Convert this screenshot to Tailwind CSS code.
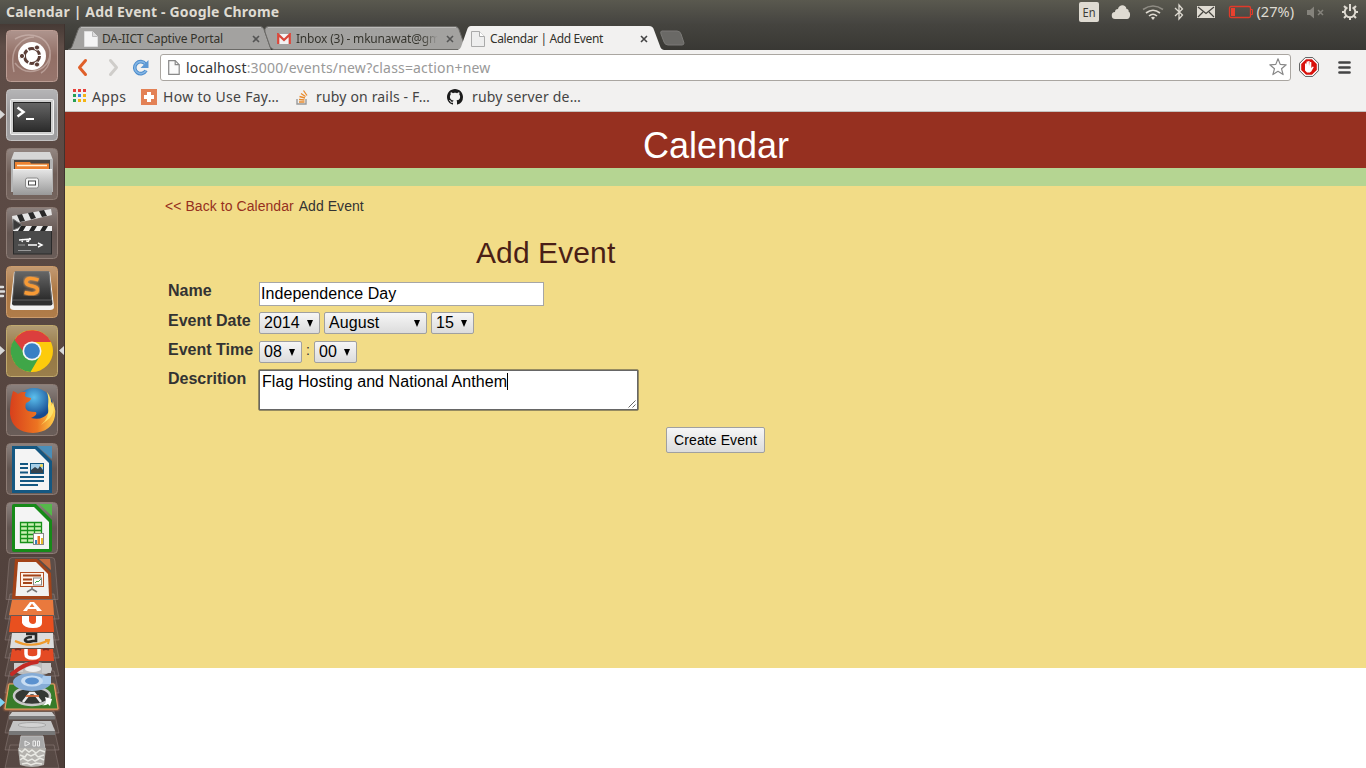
<!DOCTYPE html>
<html lang="en">
<head>
<meta charset="utf-8">
<title>Calendar | Add Event</title>
<script src="https://cdn.jsdelivr.net/npm/@tailwindcss/browser@4"></script>
</head>
<body class="flex h-[768px] w-[1366px] flex-col overflow-hidden bg-white font-['Noto_Sans',sans-serif]">

<!-- System panel -->
<header class="flex h-6 shrink-0 items-center justify-between bg-linear-to-b from-[#5a594f] to-[#454440] pl-1.5 pr-1.5 text-[#dfdbd2]">
  <span class="whitespace-nowrap text-[14px] font-bold leading-6 tracking-[0.17px]">Calendar | Add Event - Google Chrome</span>
  <svg class="h-6 w-[284px]" viewBox="1076 0 284 24" fill="none" stroke="#dfdbd2">
    <rect x="1079" y="2" width="20" height="20" rx="2" fill="#dfdbd2" stroke="none"/>
    <text x="1082.500" y="17" font-size="12.500" textLength="13" lengthAdjust="spacingAndGlyphs" fill="#3c3b37" stroke="none">En</text>
    <path d="M1115.500 19a3.500 3.500 0 0 1-.5-7q0-3 3-3c1-5 8-5 8.500 0 2 0 2.500 1.500 2 2.500 2.500 1 2 7.500-1.500 7.500z" fill="#dfdbd2" stroke="none"/>
    <path d="M1143 9.500q10-7 20 0" stroke="#8f8c84" stroke-width="1.600"/>
    <path d="M1146 13q7-5.500 14 0M1149 16q4-3.500 8 0" stroke-width="1.600"/><path d="M1151 17.500q2-1.500 4 0l-2 2.500z" fill="#dfdbd2" stroke="none"/>
    <path d="M1175 8l7.500 7-3.500 4V5l3.500 4-7.500 7" stroke-width="1.300"/>
    <rect x="1197" y="6" width="18" height="12" fill="#dfdbd2" stroke="none"/><path d="M1198 7l8 6.500 8-6.500M1198 17l5-5M1214 17l-5-5" stroke="#45443f" stroke-width="1.200"/>
    <rect x="1229.500" y="6.500" width="21" height="11" rx="1.500" stroke="#e03a2a" stroke-width="1.300"/><path d="M1251 9.500h1.500v5h-1.500" stroke="#e03a2a"/><rect x="1231" y="8" width="4" height="8" fill="#e8402e" stroke="none"/>
    <text x="1256.500" y="16.500" font-size="13.500" textLength="37.500" lengthAdjust="spacingAndGlyphs" fill="#dfdbd2" stroke="none">(27%)</text>
    <path d="M1307 10h3l4-3.500v12l-4-3.500h-3z" fill="#85837c" stroke="none"/><path d="M1318 10l5 5m0-5l-5 5" stroke="#85837c" stroke-width="1.500"/>
    <path d="M1347.400 7.300a5.300 5.300 0 1 0 5.200 0M1350 4v7" stroke-width="2"/><path d="M1344 6l2 2M1356 6l-2 2M1342 12h2.500M1358 12h-2.500M1344 18l2-2M1356 18l-2-2M1350 17.500v2.500" stroke-width="2"/>
  </svg>
</header>

<div class="flex h-[744px]">
<!-- Launcher -->
<nav class="h-full w-[65px] shrink-0 border-r border-[#3f332f] bg-linear-to-b from-[#463a35] via-[#5f4d47] via-3% to-[#4d3e39]">
  <svg class="block h-full w-16" viewBox="0 24 64 744">
    <defs>
      <linearGradient id="tile" x2="0" y2="1"><stop stop-color="#fff" stop-opacity=".3"/><stop offset=".5" stop-color="#fff" stop-opacity=".06"/><stop offset="1" stop-color="#fff" stop-opacity=".1"/></linearGradient>
      <linearGradient id="silver" x2="0" y2="1"><stop stop-color="#e4e4e4"/><stop offset="1" stop-color="#999"/></linearGradient>
      <linearGradient id="dark" x2="0" y2="1"><stop stop-color="#666"/><stop offset="1" stop-color="#2b2b2b"/></linearGradient>
      <linearGradient id="flame" x2="1" y2="0"><stop stop-color="#d8401c"/><stop offset=".6" stop-color="#ec7421"/><stop offset="1" stop-color="#ffd24c"/></linearGradient>
      <radialGradient id="globe" cy=".25"><stop stop-color="#5cc0ee"/><stop offset="1" stop-color="#164a90"/></radialGradient>
      <filter id="glow"><feGaussianBlur stdDeviation="1.2"/></filter>
    </defs>
    <!-- Dash -->
    <rect x="6.500" y="30.500" width="51" height="51" rx="4" fill="#8b665c" stroke="#bb9d94"/>
    <rect x="7" y="31" width="50" height="50" rx="4" fill="url(#tile)"/>
    <g fill="none" stroke="#dcc8c1" stroke-opacity=".5" stroke-width="1.500"><path d="M15 39q12-7 24-2 13 6 11 22-1 9-9 14M50 50q1 15-12 20-14 5-23-7M14 72q-4-20 5-28 6-7 15-7"/></g>
    <circle cx="32" cy="56" r="14" fill="#fff"/>
    <circle cx="32" cy="56" r="7.500" fill="none" stroke="#5b3e37" stroke-width="3" stroke-dasharray="14.200 1.500"/>
    <g fill="#5b3e37" stroke="#fff" stroke-width="1"><circle cx="22" cy="56" r="2.600"/><circle cx="37" cy="47.500" r="2.600"/><circle cx="37" cy="64.500" r="2.600"/></g>
    <!-- Terminal -->
    <rect x="6.500" y="89.500" width="51" height="51" rx="4" fill="#959496" stroke="#c5c3c3"/><rect x="7" y="90" width="50" height="50" rx="4" fill="url(#tile)"/>
    <rect x="10.500" y="99.500" width="43" height="35" rx="1" fill="#cfcfcf" stroke="#f2f2f2"/><rect x="13.500" y="102.500" width="37" height="29" fill="url(#dark)" stroke="#222"/>
    <path d="M17.500 107.500l6 4.500-6 4.500" fill="none" stroke="#fff" stroke-width="2.500"/><path d="M26 119h8" stroke="#fff" stroke-width="2"/>
    <path d="M0 110l5 4.500-5 4.500z" fill="#d8d8d8"/>
    <!-- Files -->
    <rect x="6.500" y="148.500" width="51" height="51" rx="4" fill="#65534c" stroke="#8d7c75"/><rect x="7" y="149" width="50" height="50" rx="4" fill="url(#tile)"/>
    <path d="M14 152h36l3 8v32H11v-32z" fill="#d6d6d6"/><path d="M11 159h42v33H11z" fill="#b4b4b4"/><rect x="14" y="160" width="36" height="11" fill="#4d4743"/><path d="M15 162h15l1 1.500h18v7.500H15z" fill="#ee8230"/><path d="M17 165.500h30" stroke="#fff1d8" stroke-width="1.500"/><path d="M13 170h39v25H13z" fill="url(#silver)"/><path d="M13 169.500h39" stroke="#f4f4f4"/>
    <rect x="25.500" y="178" width="13" height="10" rx="2" fill="#f5f5f5" stroke="#888"/><rect x="28.500" y="181" width="7" height="4" fill="#fff" stroke="#444"/>
    <!-- Video editor -->
    <rect x="6.500" y="207.500" width="51" height="51" rx="4" fill="#5a4b46" stroke="#8d7c75"/><rect x="7" y="208" width="50" height="50" rx="4" fill="url(#tile)"/>
    <rect x="13.500" y="229" width="38" height="25" fill="#4a4a4a" stroke="#2a2a2a"/>
    <path d="M12 216l39-7 1 6-39 9z" fill="#e4e4e4"/><path d="M17 215l5-1 3 7-5 1zM28 213l5-1 3 6-5 1.500zM39 211l5-1 3 6-5 1z" fill="#282828"/>
    <path d="M13 226h39v5H13z" fill="#f0f0f0"/><path d="M18 231l3-5h5l-3 5zM29 231l3-5h5l-3 5zM40 231l3-5h5l-3 5z" fill="#222"/><path d="M13 219l9 6-4 3-5 2z" fill="#3a3a3a" stroke="#777"/>
    <path d="M19 240l12-1M23 239l-1 3M27 239v3M30 238l-2 4M28 245h9M38 243l4 2-4 2" fill="none" stroke="#fff" stroke-width="1.400"/><path d="M18 245h7M18 250.500h13" stroke="#999"/>
    <!-- Sublime Text -->
    <rect x="6.500" y="266.500" width="51" height="51" rx="4" fill="#a76e36" stroke="#cc9c6c"/><rect x="7" y="267" width="50" height="50" rx="4" fill="url(#tile)"/>
    <path d="M14 272h36l4 35q0 3-4 3H14q-4 0-4-3z" fill="#f2f2f2"/><path d="M15 271.500h34l3.500 32q0 2-2 2H14q-2 0-2-2z" fill="#303030"/><path d="M15 271.500h34l2.500 28.500h-39z" fill="url(#dark)" stroke="#777" stroke-width=".7"/>
    <path d="M38.500 280q-12-4-12.500 2 0 3 6 4t5.500 4.500q-1 5-13 2" fill="none" stroke="#ffb060" stroke-width="5" filter="url(#glow)" opacity=".6"/><path d="M38.500 280q-12-4-12.500 2 0 3 6 4t5.500 4.500q-1 5-13 2" fill="none" stroke="#f79a35" stroke-width="3.400"/>
    <g stroke="#ddd" stroke-width="2.400" stroke-linecap="round"><path d="M0 287h3M0 291.500h4M0 296h3"/></g>
    <!-- Chrome -->
    <rect x="6.500" y="325.500" width="51" height="51" rx="4" fill="#8f7038" stroke="#c0a96f"/><rect x="7" y="326" width="50" height="50" rx="4" fill="url(#tile)"/>
    <circle cx="32" cy="351" r="21" fill="#fdcb0c"/><path d="M32 351L15 338.500a21 21 0 0 0 15.500 33.500L41 354z" fill="#3fa648"/><path d="M14.500 340a21 21 0 0 1 36.500 2H32l-9 9z" fill="#dc3f3d"/><circle cx="32" cy="351" r="9.500" fill="#f5f5f5"/><circle cx="32" cy="351" r="7.800" fill="#387fc4"/>
    <path d="M0 346l5 4.500-5 4.500zM64 346l-5 4.500 5 4.500z" fill="#d8d8d8"/>
    <!-- Firefox -->
    <rect x="6.500" y="384.500" width="51" height="51" rx="4" fill="#594b46" stroke="#8d7c75"/><rect x="7" y="385" width="50" height="50" rx="4" fill="url(#tile)"/>
    <circle cx="34" cy="407" r="19" fill="url(#globe)"/>
    <path d="M13 391q3 1 5 3 4-3 8-2-2 3 0 5l5 1q0 3-5 5-2 5 2 8 4 1 8 1 2 3-5 6 11 3 17-5 3-6 1-13 8 6 6 16-3 16-22 17-21-1-23-19 0-13 3-23z" fill="url(#flame)"/>
    <path d="M47 392q5 6 4 14 2-2 2-5 3 10-3 17l-9 7q9-7 7-19 1-8-1-14z" fill="#ffe169"/>
    <!-- Writer -->
    <rect x="6.500" y="443.500" width="51" height="51" rx="4" fill="#594b46" stroke="#8d7c75"/><rect x="7" y="444" width="50" height="50" rx="4" fill="url(#tile)"/>
    <path d="M12 446h25l15 15v32H12z" fill="#145781"/><path d="M37 446h15v13z" fill="#4b8eb8"/><path d="M15 449h20l14 14v27H15z" fill="#f4f4f4"/><g stroke="#145781" stroke-width="2"><path d="M20 464h8M20 468h8M20 472.500h8M20 477h24M20 481h24M20 485h18"/></g><rect x="30.500" y="463.500" width="13" height="10" fill="#a7cfe8" stroke="#145781"/><path d="M31 473v-3l4-3 3 2 2-3 3 4v3z" fill="#36434c"/><circle cx="41.500" cy="465.500" r="1.500" fill="#f6d84b"/>
    <!-- Calc -->
    <rect x="6.500" y="502.500" width="51" height="51" rx="4" fill="#594b46" stroke="#8d7c75"/><rect x="7" y="503" width="50" height="50" rx="4" fill="url(#tile)"/>
    <path d="M14 504h22l16 16v30q0 2-2 2H14q-2 0-2-2v-44q0-2 2-2z" fill="#168a18"/><path d="M39 504h13v12z" fill="#55b84a"/><path d="M15 507h19l15 15v27H15z" fill="#f4f4f4"/><rect x="20" y="522" width="22" height="21" fill="#c9f0b2"/><path d="M20.500 522.500h21v20h-21zM20 526.500h22M20 530.500h22M20 534.500h22M20 538.500h22M27.500 522v21M34.500 522v21" fill="none" stroke="#16901a" stroke-width="1.300"/><rect x="33.500" y="533.500" width="10" height="11" fill="#fff" stroke="#888"/><path d="M35 544v-4h2v4z" fill="#3b80bd"/><path d="M37.500 544v-8h2.500v8z" fill="#e67925"/><path d="M41 544v-6h2v6z" fill="#e7b82b"/>
    <!-- Folded stack -->
    <g fill="#fff" fill-opacity=".06" stroke="#b9aaa4" stroke-opacity=".3">
      <path d="M12 557.500h40q3 0 3 4l3 38H6l3-38q0-4 3-4z"/><path d="M10 594l-5 25h54l-5-25zM10 615l-5 25h54l-5-25zM10 635l-5 23h54l-5-23zM10 653l-5 23h54l-5-23zM10 671l-5 22h54l-5-22zM10 711l-5 22h54l-5-22zM10 728l-5 22h54l-5-22zM10 745l-5 23h54l-5-23z"/>
    </g>
    <path d="M15 559h22l14 14 1 26H12z" fill="#a34318"/><path d="M39 559h11l1 11z" fill="#c76c3d"/><path d="M18 562h18l12 12 1 22H15.500z" fill="#f1f1f1"/><rect x="20.500" y="572.500" width="23" height="14" fill="#fff3e9" stroke="#b24d22"/><path d="M23 575.500h18M23 579.500h9M23 583h9" stroke="#a34318" stroke-width="1.800"/><rect x="33.500" y="578" width="8" height="7" fill="#fff" stroke="#888"/><path d="M35 583l2-2 1 1 3-3" fill="none" stroke="#3ca643"/><path d="M32 587v2l-5 3m5-3l5 3" fill="none" stroke="#777" stroke-width="1.500"/>
    <path d="M12 600h41l1 15H9z" fill="#e9793d"/><path d="M23 611l7-9h4l8 9h-5l-1-2h-8l-1 2z" fill="#fff"/><path d="M29.500 607h5l-2.500-3.500z" fill="#e9793d"/>
    <path d="M11 616h42l1 16H9z" fill="#e9501f"/><path d="M22 616h20v7q0 5-9 5t-11-5z" fill="#fff"/><path d="M29 616h7v5q0 3-3 3t-4-3z" fill="#e9501f"/>
    <path d="M12 633h41l1 15H10z" fill="#dcdcdc"/><path d="M26 634h10v7h-3q-7 2-8-1 1-3 7-3" fill="none" stroke="#292929" stroke-width="2.600"/><path d="M15 641q17 8 34-1m-4 0h4l-1 4" fill="none" stroke="#ef9b2e" stroke-width="2"/>
    <path d="M12 649h41l1 12H10z" fill="#e44a24"/><path d="M26 649v5q0 4 6.500 4t6.500-4v-5" fill="none" stroke="#fff" stroke-width="3.500"/><path d="M15 650q3-2 6 0m22 0q3-2 6 0" fill="none" stroke="#7b2e22" stroke-width="2"/>
    <ellipse cx="33" cy="669" rx="19" ry="7" fill="#bcbcbc"/><path d="M14 663h9v9h-9zM42 663h9v10h-9z" fill="#ccc"/><ellipse cx="33" cy="669" rx="8" ry="3" fill="#eee"/><path d="M12 674q13-11 25-12" fill="none" stroke="#c52b25" stroke-width="4" stroke-linecap="round"/>
    <path d="M8 684h47l4 26H4z" fill="#f08a4a" filter="url(#glow)"/><path d="M9 684h45l4 25H5z" fill="#387b29" stroke="#e8a06b" stroke-width="1"/><ellipse cx="32" cy="696" rx="18" ry="9" fill="#343834" stroke="#c8c8c8" stroke-width="2.500"/><path d="M23 702l7-9h4l7 9" fill="none" stroke="#eee" stroke-width="2.500"/><path d="M26 696h13" stroke="#d66a3a" stroke-width="1.800"/><path d="M45 697l7 2-2 7-2-2q-3 2-6 1 4-1 4-4z" fill="#fff"/>
    <ellipse cx="32" cy="682" rx="19" ry="9" fill="#86acd6"/><path d="M43 676h8v8H40z" fill="#aacbed"/><ellipse cx="32" cy="681" rx="11" ry="5.500" fill="#c8ddf2"/><ellipse cx="32" cy="681" rx="7" ry="3.500" fill="#5a91cf"/>
    <path d="M0 698l5 4.500-5 4.500z" fill="#7fd3f5"/>
    <path d="M12 712h40l3 4H9z" fill="#cacaca"/><path d="M9 716h46v3.500H9z" fill="#777"/><path d="M13 721h38l4 10H9z" fill="#c4c4c4"/><path d="M9 731h46v4H9z" fill="#777"/><ellipse cx="32" cy="725" rx="14" ry="2.500" fill="#d2d2d2" stroke="#aaa"/>
    <path d="M21 736h22l2 13H19z" fill="#a8a8a8" stroke="#bbb"/><path d="M25 741v5l5-2.500zM33 741h2.500v5H33zM37.500 741h2v5h-2z" fill="none" stroke="#eee"/>
    <path d="M18 748h28l-2 17q-12 4-24 0z" fill="#b4b2ae"/><path d="M19 750l3 2 3-3 4 3 3-2 4 3 4-3 5 2M20 755l5 2 2-3 4 2 4-2 3 3 6-2M20 760l3-2 5 3 4-2 3 2 5-3 4 2M22 764l5-1 4 2 5-2 6 1" fill="none" stroke="#e9e9e4" stroke-width="1.500"/>
  </svg>
</nav>

<div class="flex w-[1301px] flex-col">
  <!-- Tab strip -->
  <div class="flex h-[26px] items-end bg-linear-to-b from-[#45443f] to-[#393834] pl-[3px] text-[12px] text-[#33322b]">
    <div class="relative flex h-6 w-[203px] items-center pl-4 pt-px">
      <svg class="absolute inset-0 h-6 w-[203px]" viewBox="0 0 203 24"><path d="M0 23.500q3 0 4-3L10 4q1-3.500 4-3.500h178q3 0 4 3l7 20z" fill="#a3a2a0" stroke="#6b6a67"/><path d="M13 1.500h180" stroke="#bcbbb9"/></svg>
      <svg class="relative h-4 w-3.5" viewBox="0 0 14 16"><path d="M.5.500h8l5 5v10H.5z" fill="#f4f4f4" stroke="#ddd"/><path d="M8.500.500v5h5" fill="#ddd" stroke="#bbb"/></svg>
      <span class="relative ml-1 whitespace-nowrap tracking-[-0.15px]">DA-IICT Captive Portal</span>
      <svg class="absolute left-[184px] top-[9px] h-2 w-2" viewBox="0 0 8 8"><path d="M1 1l6 6m0-6L1 7" stroke="#555" stroke-width="1.600"/></svg>
    </div>
    <div class="relative -ml-2 flex h-6 w-[203px] items-center pl-[14px] pt-px">
      <svg class="absolute inset-0 h-6 w-[203px]" viewBox="0 0 203 24"><path d="M11 23.500q-2 0-4-3L2 6Q1 .500 6 .500h186q3 0 4 3l7 20z" fill="#a3a2a0" stroke="#6b6a67"/><path d="M5 1.500h188" stroke="#bcbbb9"/></svg>
      <svg class="relative h-3 w-[14px]" viewBox="0 0 14 12"><path d="M0 1h14v10H0z" fill="#f3f3f3"/><path d="M1.200 11V1.500L7 7l5.800-5.500V11" fill="none" stroke="#d9483b" stroke-width="2.300"/></svg>
      <span class="relative ml-[5px] w-[142px] whitespace-nowrap bg-linear-to-r from-[#33322b] from-88% to-[#a3a2a0] bg-clip-text tracking-[-0.2px] text-transparent">Inbox (3) - mkunawat@gm</span>
      <svg class="absolute left-[183px] top-[9px] h-2 w-2" viewBox="0 0 8 8"><path d="M1 1l6 6m0-6L1 7" stroke="#555" stroke-width="1.600"/></svg>
    </div>
    <div class="relative -ml-2 flex h-6 w-[206px] items-center pl-[13px] pt-px">
      <svg class="absolute inset-0 h-6 w-[206px]" viewBox="0 0 206 24"><path d="M-2 24q4 0 5-3L9 4q1-4 4-4h178q4 0 5 4l6 16q1 4 5 4z" fill="#f2f1f0"/></svg>
      <svg class="relative h-4 w-3.5" viewBox="0 0 14 16"><path d="M.5.500h8l5 5v10H.5z" fill="#eee" stroke="#aaa"/><path d="M8.500.500v5h5" fill="#fff" stroke="#aaa"/></svg>
      <span class="relative ml-[5px] whitespace-nowrap tracking-[-0.37px]">Calendar | Add Event</span>
      <svg class="absolute left-[182px] top-[9px] h-2 w-2" viewBox="0 0 8 8"><path d="M1 1l6 6m0-6L1 7" stroke="#444" stroke-width="1.600"/></svg>
    </div>
    <svg class="-ml-[5px] mb-1 h-4 w-7" viewBox="0 0 28 16"><path d="M3 1h15q3 0 4 3l3 9q0 2-2 2H9q-3 0-4-3L2 4Q1 1 3 1z" fill="#6a6966" stroke="#7a7976"/></svg>
  </div>
  <!-- Toolbar -->
  <div class="flex h-[34px] items-center bg-[#f2f1f0] pl-3 text-[15px]">
    <svg class="h-7 w-[76px]" viewBox="77 53 76 28" fill="none"><path d="M85.500 60.500l-6 7 6 7" stroke="#e0602a" stroke-width="3" stroke-linecap="round" stroke-linejoin="round"/><path d="M110.500 60.500l6 7-6 7" stroke="#cfcdca" stroke-width="3" stroke-linecap="round" stroke-linejoin="round"/><path d="M145.500 64a6 6 0 1 0 .5 6.500" stroke="#4b8bcb" stroke-width="3.600"/><path d="M145.500 64a6 6 0 1 0 .5 6.500" stroke="#83b5e4" stroke-width="1.600"/><path d="M148.500 60v8h-8z" fill="#5d98d4"/></svg>
    <div class="ml-[7px] flex h-[27px] w-[1131px] items-center rounded-[3px] border border-[#aaa6a1] bg-white pl-[7px] pr-[3px]">
      <svg class="h-[15px] w-3" viewBox="0 0 12 15"><path d="M.7.700h6.500l4 4v9.600H.7z" fill="#fafafa" stroke="#888" stroke-width="1.200"/><path d="M7.200.700v4h4" fill="none" stroke="#888" stroke-width="1.200"/></svg>
      <span class="ml-1.5 whitespace-nowrap text-[14px] tracking-[0.17px] text-[#999]"><span class="text-[#333]">localhost</span>:3000/events/new?class=action+new</span>
      <svg class="ml-auto h-[18px] w-[18px]" viewBox="0 0 18 18"><path d="M9 .8l2.200 5.600 6 .4-4.700 3.900 1.600 5.900L9 13.300l-5.100 3.300 1.600-5.900L.8 6.800l6-.4z" fill="#fff" stroke="#888" stroke-width="1.200" stroke-linejoin="round"/></svg>
    </div>
    <svg class="ml-2 h-5 w-5" viewBox="0 0 20 20"><path d="M6.200.600h7.600l5.600 5.600v7.600l-5.600 5.600H6.200L.6 13.800V6.200z" fill="#fff" stroke="#555"/><path d="M7 2.200h6L17.800 7v6L13 17.800H7L2.200 13V7z" fill="#d9120c"/><path d="M6 9v-2.500h1.400V9l.2-4.500H9V9l.2-5h1.300l.2 5 .3-4h1.300v6l1.500-1.500 1 .5-2.500 4.500-1.500 1H8l-2-2z" fill="#fff"/></svg>
    <svg class="ml-[19px] h-[13px] w-[13px]" viewBox="0 0 13 13"><path d="M1.500 1.500h10M1.500 6.500h10M1.500 11.500h10" stroke="#444" stroke-width="2.700" stroke-linecap="round"/></svg>
  </div>
  <!-- Bookmarks -->
  <div class="flex h-7 shrink-0 items-center whitespace-nowrap border-b border-[#c4c2bf] bg-[#f2f1f0] pb-0.5 pl-2 text-[14px] text-[#444]">
    <svg class="-mt-0.5 h-[13px] w-[13px]" viewBox="0 0 13 13"><path d="M0 0h3v3H0zM5 0h3v3H5zM10 0h3v3h-3z" fill="#e8403a"/><path d="M0 5h3v3H0zM0 10h3v3H0z" fill="#27a055"/><path d="M5 5h3v3H5z" fill="#3b83ec"/><path d="M10 5h3v3h-3zM5 10h3v3H5zM10 10h3v3h-3z" fill="#f3b414"/></svg>
    <span class="ml-1.5 w-[35px] tracking-[0.4px]">Apps</span>
    <svg class="ml-3.5 h-4 w-4" viewBox="0 0 16 16"><path d="M0 0h16v16H0z" fill="#e38155"/><path d="M6 3h4v3h3v4h-3v3H6v-3H3V6h3z" fill="#fff"/></svg>
    <span class="ml-1.5 w-[117px] tracking-[0.3px]">How to Use Fay…</span>
    <svg class="ml-4 h-4 w-[14px]" viewBox="0 0 14 16" fill="none"><path d="M1 10v5h9v-5" stroke="#999" stroke-width="1.400"/><path d="M3 13h5.500M3 10.500l5.500.5M3.500 7.500L9 9M5 4.500L9.500 7.500M7.500 1.500l3.500 5" stroke="#e98a2b" stroke-width="1.300"/></svg>
    <span class="ml-1.5 w-[114px] tracking-[0.17px]">ruby on rails - F…</span>
    <svg class="ml-[17px] h-4 w-4" viewBox="0 0 16 16"><path fill="#1b1b1b" d="M8 0C3.580 0 0 3.580 0 8c0 3.540 2.290 6.530 5.470 7.590.4.070.55-.17.55-.38 0-.19-.01-.82-.01-1.490-2.010.37-2.530-.49-2.690-.94-.09-.23-.48-.94-.82-1.130-.28-.15-.68-.52-.01-.53.63-.01 1.080.58 1.230.82.720 1.210 1.870.87 2.330.66.070-.52.280-.87.510-1.070-1.780-.2-3.640-.89-3.640-3.950 0-.87.310-1.590.82-2.150-.08-.2-.36-1.020.08-2.120 0 0 .67-.21 2.200.82.640-.18 1.320-.27 2-.27s1.360.09 2 .27c1.530-1.040 2.200-.82 2.200-.82.440 1.100.160 1.920.080 2.120.51.560.820 1.270.820 2.150 0 3.070-1.870 3.750-3.650 3.950.29.250.540.730.540 1.480 0 1.070-.01 1.930-.01 2.200 0 .210.150.460.550.380A8.010 8.010 0 0 0 16 8c0-4.420-3.580-8-8-8z"/></svg>
    <span class="ml-[9px] w-[110px] tracking-[0.2px]">ruby server de…</span>
  </div>

  <!-- Page -->
  <main class="flex grow flex-col bg-white font-['Liberation_Sans',sans-serif] text-[#333]">
    <h1 class="h-14 bg-[#963020] pl-px pt-[5px] text-center text-[36px] leading-[58px] text-white">Calendar</h1>
    <div class="h-[18px] bg-[#b5d592]"></div>
    <section class="h-[482px] bg-[#f2dc87] pl-[100px] pt-2.5">
      <p class="text-[14px] leading-5"><a class="mr-px tracking-[0.06px] text-[#963020]">&lt;&lt; Back to Calendar</a> <span class="tracking-[0.06px]">Add Event</span></p>
      <h2 class="pl-[311px] pt-[17px] text-[30px] leading-[39px] tracking-[0.1px] text-[#4a1f16]">Add Event</h2>
      <div class="ml-[3px] grid grid-cols-[91px_auto] text-[16px] leading-5">
        <b class="h-[30px] pt-[9px]">Name</b>
        <div class="mt-[10px] h-6 w-[285px] border border-[#a6a6a6] bg-white pl-px leading-[22px] tracking-[0.06px] text-black">Independence Day</div>
        <b class="mt-[5px]">Event Date</b>
        <div class="flex gap-1 text-black">
          <span class="mt-1.5 flex h-[22px] w-[61px] items-center justify-between rounded-xs border border-[#a0a0a0] bg-linear-to-b from-[#f6f6f6] to-[#dcdcdc] pl-1 pr-[5px]">2014<svg class="h-[7px] w-2" viewBox="0 0 8 7"><path d="M1 0h6L4 7z"/></svg></span>
          <span class="mt-1.5 flex h-[22px] w-[103px] items-center justify-between rounded-xs border border-[#a0a0a0] bg-linear-to-b from-[#f6f6f6] to-[#dcdcdc] pl-1 pr-[5px] tracking-[0.1px]">August<svg class="h-[7px] w-2" viewBox="0 0 8 7"><path d="M1 0h6L4 7z"/></svg></span>
          <span class="mt-1.5 flex h-[22px] w-[43px] items-center justify-between rounded-xs border border-[#a0a0a0] bg-linear-to-b from-[#f6f6f6] to-[#dcdcdc] pl-1 pr-[5px]">15<svg class="h-[7px] w-2" viewBox="0 0 8 7"><path d="M1 0h6L4 7z"/></svg></span>
        </div>
        <b class="mt-1.5">Event Time</b>
        <div class="flex pt-[7px] text-black">
          <span class="flex h-[22px] w-[43px] items-center justify-between rounded-xs border border-[#a0a0a0] bg-linear-to-b from-[#f6f6f6] to-[#dcdcdc] pl-1 pr-[5px]">08<svg class="h-[7px] w-2" viewBox="0 0 8 7"><path d="M1 0h6L4 7z"/></svg></span>
          <span class="w-3 text-center text-[14px] leading-[18px] text-[#333]">:</span>
          <span class="flex h-[22px] w-[43px] items-center justify-between rounded-xs border border-[#a0a0a0] bg-linear-to-b from-[#f6f6f6] to-[#dcdcdc] pl-1 pr-[5px]">00<svg class="h-[7px] w-2" viewBox="0 0 8 7"><path d="M1 0h6L4 7z"/></svg></span>
        </div>
        <b class="mt-1.5">Descrition</b>
        <div class="-ml-px mt-1.5 h-[42px] w-[381px] rounded-xs border border-[#968b61]">
          <div class="flex h-full justify-between border border-[#666] bg-white pl-0.5 text-black"><span class="mt-0.5 h-[17px] border-r border-black leading-[18px] tracking-[0.07px]">Flag Hosting and National Anthem</span><svg class="mb-px mr-px h-2 w-2 self-end" viewBox="0 0 8 8"><path d="M.5 7.500l7-7m0 4l-3 3" stroke="#666" fill="none"/></svg></div>
        </div>
      </div>
      <div class="ml-[501px] mt-4 h-[26px] w-[99px] rounded-xs border border-[#a0a0a0] bg-linear-to-b from-[#f6f6f6] to-[#dcdcdc] text-center text-[14px] leading-6 tracking-[0.1px] text-black">Create Event</div>
    </section>
  </main>
</div>
</div>
</body>
</html>
